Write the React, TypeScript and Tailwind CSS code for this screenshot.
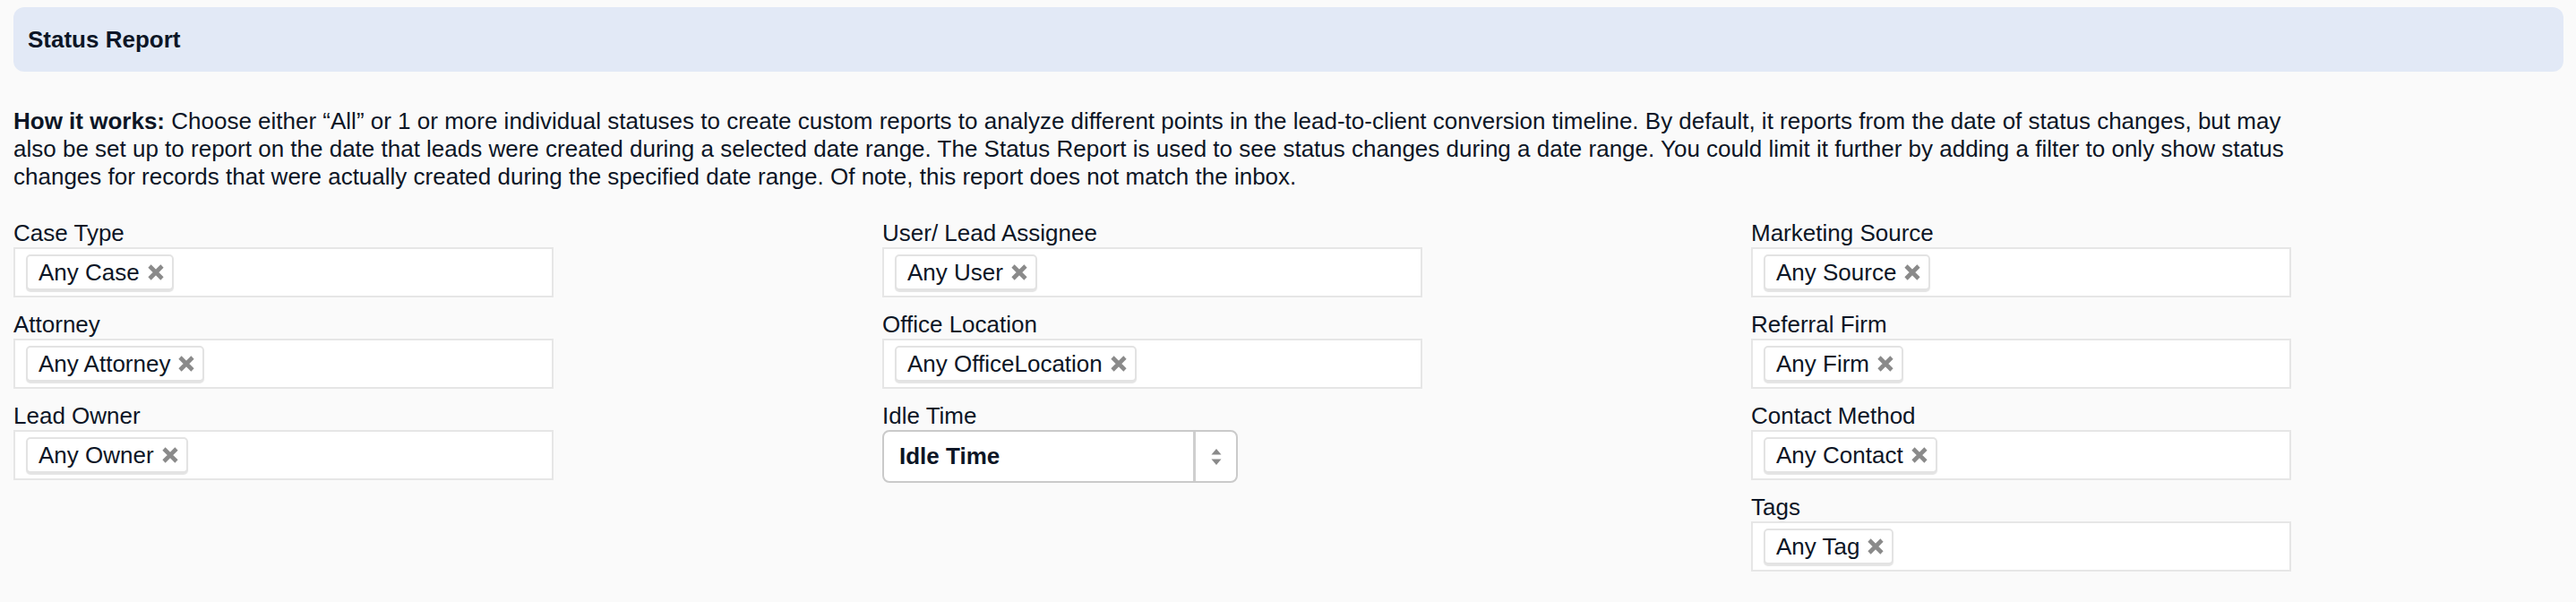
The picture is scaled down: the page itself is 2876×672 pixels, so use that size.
import React from 'react'

type Field = { label: string; value?: string; select?: boolean }

const COLUMNS: Field[][] = [
  [
    { label: 'Case Type', value: 'Any Case' },
    { label: 'Attorney', value: 'Any Attorney' },
    { label: 'Lead Owner', value: 'Any Owner' },
  ],
  [
    { label: 'User/ Lead Assignee', value: 'Any User' },
    { label: 'Office Location', value: 'Any OfficeLocation' },
    { label: 'Idle Time', value: 'Idle Time', select: true },
  ],
  [
    { label: 'Marketing Source', value: 'Any Source' },
    { label: 'Referral Firm', value: 'Any Firm' },
    { label: 'Contact Method', value: 'Any Contact' },
    { label: 'Tags', value: 'Any Tag' },
  ],
]

function RemoveIcon() {
  return (
    <svg width="20" height="18" viewBox="0 0 20 18" className="shrink-0">
      <path d="M3 2 L17 16 M17 2 L3 16" stroke="#8a8a8a" strokeWidth="4.6" strokeLinecap="butt" />
    </svg>
  )
}

function Chip({ text }: { text: string }) {
  return (
    <span className="flex h-[40px] items-center gap-[8px] rounded-[5px] border-2 border-[#e3e3e3] bg-white pl-[12px] pr-[8px] shadow-[0_2px_1px_#e4e4e4]">
      <span className="leading-none">{text}</span>
      <RemoveIcon />
    </span>
  )
}

function TagBox({ value }: { value: string }) {
  return (
    <div className="flex h-[56px] w-[603px] items-center border-2 border-[#e6e6e6] bg-white pl-[12px]">
      <Chip text={value} />
    </div>
  )
}

function SelectBox({ value }: { value: string }) {
  return (
    <div className="flex h-[59px] w-[397px] items-stretch rounded-[8px] border-2 border-[#cacaca] bg-white">
      <div className="flex flex-1 items-center pl-[17px] font-bold">{value}</div>
      <div className="flex w-[48px] items-center justify-center border-l-[3px] border-[#cfcfcf]">
        <svg width="12" height="20" viewBox="0 0 12 20">
          <path d="M6 1 L11.5 7.5 L0.5 7.5 Z" fill="#8a8a8a" />
          <path d="M6 19 L11.5 12.5 L0.5 12.5 Z" fill="#8a8a8a" />
        </svg>
      </div>
    </div>
  )
}

export default function App() {
  return (
    <div className="min-h-screen bg-[#fafafa] pl-[15px] pr-[14px] pt-[8px] font-['Liberation_Sans',Arial,sans-serif] text-[26px] leading-[31px] text-[#0d1626]">
      {/* header */}
      <div className="flex h-[72px] items-center rounded-[12px] bg-[#e2e9f6] pl-[16px]">
        <h2 className="font-bold">Status Report</h2>
      </div>

      <p className="mt-[40px] max-w-[2570px]">
        <span className="font-bold">How it works:</span> Choose either “All” or 1 or more individual statuses to
        create custom reports to analyze different points in the lead-to-client conversion timeline. By default, it
        reports from the date of status changes, but may also be set up to report on the date that leads were created
        during a selected date range. The Status Report is used to see status changes during a date range. You could
        limit it further by adding a filter to only show status changes for records that were actually created during
        the specified date range. Of note, this report does not match the inbox.
      </p>

      <div className="mt-[32px] grid grid-cols-[970px_970px_1fr]">
        {COLUMNS.map((col, i) => (
          <div key={i} className="flex flex-col">
            {col.map(f => (
              <div key={f.label} className="mb-[15px] flex flex-col">
                <label className="h-[31px]">{f.label}</label>
                {f.select ? <SelectBox value={f.value!} /> : <TagBox value={f.value!} />}
              </div>
            ))}
          </div>
        ))}
      </div>
    </div>
  )
}
